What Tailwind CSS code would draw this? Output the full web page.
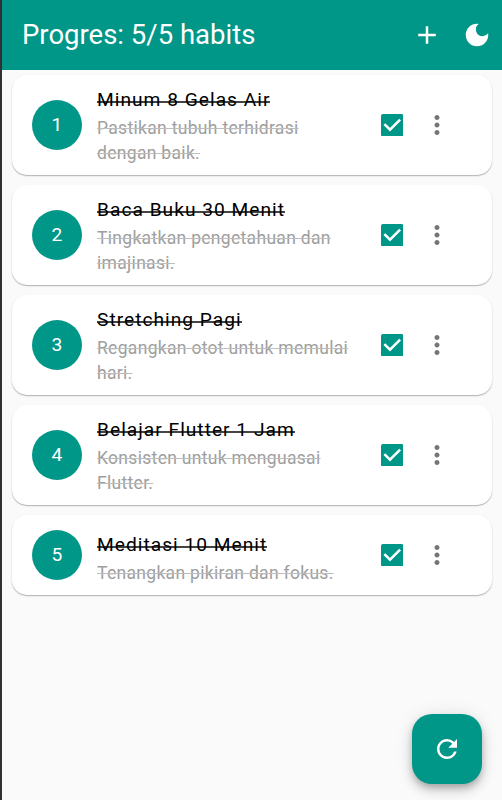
<!DOCTYPE html>
<html lang="id">
<head>
<meta charset="utf-8">
<title>Habits</title>
<script src="https://cdn.jsdelivr.net/npm/@tailwindcss/browser@4"></script>
</head>
<body class="bg-[#fafafa]">
<svg class="hidden">
  <symbol id="check" viewBox="0 0 18 18"><rect width="18" height="18" rx="1.5" fill="#009688"/><path d="M2.7 8.1 7.2 12.6 15.3 4.5" fill="none" stroke="#fff" stroke-width="2"/></symbol>
  <symbol id="more" viewBox="0 0 24 24"><path d="M12 8c1.1 0 2-.9 2-2s-.9-2-2-2-2 .9-2 2 .9 2 2 2zm0 2c-1.1 0-2 .9-2 2s.9 2 2 2 2-.9 2-2-.9-2-2-2zm0 6c-1.1 0-2 .9-2 2s.9 2 2 2 2-.9 2-2-.9-2-2-2z"/></symbol>
</svg>
<div class="relative flex h-[800px] w-[502px] flex-col overflow-hidden border-l-2 border-[#303134] bg-[#fafafa] font-['Roboto',sans-serif]">
  <header class="flex h-[70px] shrink-0 items-center bg-[#009688] pl-5 text-white">
    <h1 class="flex-1 pb-[2px] text-[27.5px] leading-[35px]">Progres: 5/5 habits</h1>
    <button class="mr-5 size-[30px]"><svg class="size-[30px]" viewBox="0 0 24 24" fill="currentColor"><path d="M19 13h-6v6h-2v-6H5v-2h6V5h2v6h6v2z"/></svg></button>
    <button class="mr-[10px] size-[30px]"><svg class="size-[30px]" viewBox="0 0 24 24" fill="currentColor"><path d="M12 3a9 9 0 1 0 9 9c0-.46-.04-.92-.1-1.36a5.389 5.389 0 0 1-4.4 2.26 5.403 5.403 0 0 1-3.14-9.8c-.44-.06-.9-.1-1.36-.1z"/></svg></button>
  </header>
  <main id="list" class="flex flex-col gap-[10px] px-[10px] pt-[5px]"></main>
  <button class="absolute right-5 bottom-4 flex size-[70px] items-center justify-center rounded-[20px] bg-[#009688] text-white shadow-[0_4px_6px_-1px_rgba(0,0,0,0.2),0_7px_12px_rgba(0,0,0,0.14),0_1px_18px_rgba(0,0,0,0.1)]">
    <svg class="size-[30px]" viewBox="0 0 24 24" fill="currentColor"><path d="M17.65 6.35A7.958 7.958 0 0 0 12 4c-4.42 0-7.99 3.58-7.99 8s3.57 8 7.99 8c3.73 0 6.84-2.55 7.73-6h-2.08A5.99 5.99 0 0 1 12 18c-3.31 0-6-2.69-6-6s2.69-6 6-6c1.66 0 3.14.69 4.22 1.78L13 11h7V4l-2.35 2.35z"/></svg>
  </button>
</div>
<script>
const habits = [
  ["Minum 8 Gelas Air", "Pastikan tubuh terhidrasi dengan baik."],
  ["Baca Buku 30 Menit", "Tingkatkan pengetahuan dan imajinasi."],
  ["Stretching Pagi", "Regangkan otot untuk memulai hari."],
  ["Belajar Flutter 1 Jam", "Konsisten untuk menguasai Flutter."],
  ["Meditasi 10 Menit", "Tenangkan pikiran dan fokus."]
];
document.getElementById("list").innerHTML = habits.map(([title, note], i) => `
  <article class="flex min-h-20 items-center rounded-[15px] bg-white pl-5 shadow-[0_1px_1px_rgba(0,0,0,0.2),0_1px_2px_rgba(0,0,0,0.12)]">
    <div class="flex size-[50px] shrink-0 items-center justify-center rounded-full bg-[#009688] text-[19.2px] text-white">${i + 1}</div>
    <div class="ml-[15px] w-[256px] self-end pb-[9px] pt-[10px]">
      <h2 class="mb-[2px] text-[19.2px] leading-[29px] tracking-[1px] whitespace-nowrap text-black"><span class="bg-[linear-gradient(transparent_13px,#444_13px,#444_15px,transparent_15px)]">${title}</span></h2>
      <p class="text-[17.5px] leading-[25px] tracking-[0.3125px] text-[#9e9e9e] line-through decoration-[#bdbdbd] decoration-1">${note}</p>
    </div>
    <svg class="ml-[27.75px] size-[22.5px] shrink-0"><use href="#check"/></svg>
    <svg class="ml-[18.75px] size-[30px] shrink-0 fill-[#757575]"><use href="#more"/></svg>
  </article>`).join("");
</script>
</body>
</html>
